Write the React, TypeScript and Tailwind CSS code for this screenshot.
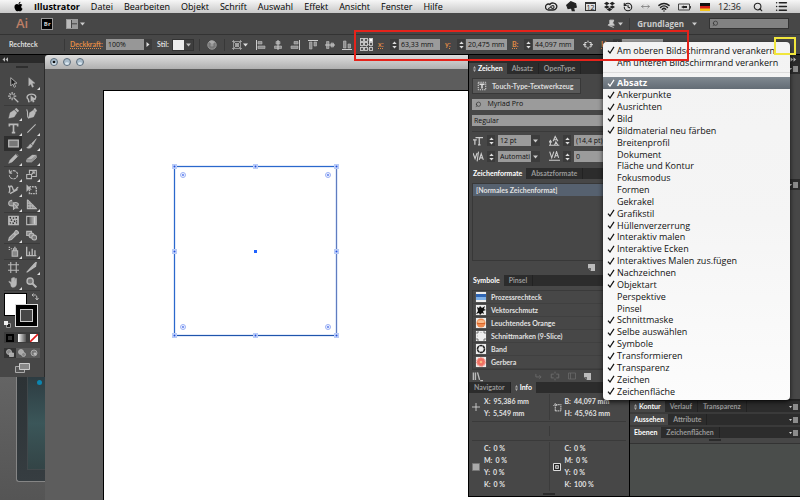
import type { ReactNode } from "react";
import { FaApple, FaDropbox } from "react-icons/fa";
import { History, List, MoveHorizontal, Search, Wifi } from "lucide-react";

const MENUS = ["Datei", "Bearbeiten", "Objekt", "Schrift", "Auswahl", "Effekt", "Ansicht", "Fenster", "Hilfe"];

const PANEL_ITEMS: { label: string; checked: boolean }[] = [
  { label: "Absatz", checked: true },
  { label: "Ankerpunkte", checked: true },
  { label: "Ausrichten", checked: true },
  { label: "Bild", checked: true },
  { label: "Bildmaterial neu färben", checked: true },
  { label: "Breitenprofil", checked: false },
  { label: "Dokument", checked: false },
  { label: "Fläche und Kontur", checked: false },
  { label: "Fokusmodus", checked: false },
  { label: "Formen", checked: false },
  { label: "Gekrakel", checked: false },
  { label: "Grafikstil", checked: true },
  { label: "Hüllenverzerrung", checked: true },
  { label: "Interaktiv malen", checked: true },
  { label: "Interaktive Ecken", checked: true },
  { label: "Interaktives Malen zus.fügen", checked: true },
  { label: "Nachzeichnen", checked: true },
  { label: "Objektart", checked: true },
  { label: "Perspektive", checked: false },
  { label: "Pinsel", checked: false },
  { label: "Schnittmaske", checked: true },
  { label: "Selbe auswählen", checked: true },
  { label: "Symbole", checked: true },
  { label: "Transformieren", checked: true },
  { label: "Transparenz", checked: true },
  { label: "Zeichen", checked: true },
  { label: "Zeichenfläche", checked: true },
];

function Svg({ size = 11, box = 16, children }: { size?: number; box?: number; children: ReactNode }) {
  return (
    <svg
      width={size}
      height={size}
      viewBox={`0 0 ${box} ${box}`}
      fill="none"
      stroke="currentColor"
      strokeWidth="1.6"
      className="shrink-0"
      aria-hidden="true"
    >
      {children}
    </svg>
  );
}

const Caret = () => (
  <svg width="5" height="4" viewBox="0 0 5 4" className="shrink-0" aria-hidden="true">
    <path d="M0 0.5h5L2.5 3.5z" fill="currentColor" />
  </svg>
);

const Tick = () => (
  <svg width="8" height="8" viewBox="0 0 8 8" fill="none" stroke="currentColor" strokeWidth="1.2" aria-hidden="true">
    <path d="M1 4.6l2 2.4L7 0.8" />
  </svg>
);

const Divider = () => <span className="h-3 w-px shrink-0 bg-[#383838]" />;

/* ---------- menu bar ---------- */

function MenuBar() {
  return (
    <nav className="flex h-[13px] shrink-0 items-center justify-between bg-linear-to-b from-[#f6f6f6] to-[#c9c9c9] pl-[13px] pr-[12px] text-[9px] leading-[13px] text-black">
      <div className="flex items-center gap-[11px]">
        <button aria-label="Apple" className="w-[10px]">
          <FaApple size={11} />
        </button>
        <button className="font-bold">Illustrator</button>
        {MENUS.map((m) => (
          <button key={m}>{m}</button>
        ))}
      </div>
      <div className="flex items-center gap-[8px] text-[#222]">
        <svg width="13" height="9" viewBox="0 0 13 9" fill="none" stroke="currentColor" aria-hidden="true">
          <path d="M3.5 8a3 3 0 0 1 0-6q1 0 2 1M5 2a4 3.500 0 1 1 3 6H3.500" strokeWidth="1.300" />
          <path d="M3 6.500q1.500 0 2.500-1.500t2.500-1.500a1.600 1.600 0 0 1 0 3q-1 0-2-1.200" strokeWidth="1.100" />
        </svg>
        <Svg size={11}>
          <path d="M1 6l6-5 7 3 1 5-4 1 1 4H9l-1-4-5 1z" fill="currentColor" />
        </Svg>
        <span className="flex h-[9px] w-[11px] items-center justify-center border border-t-2 border-[#333] text-[7px] leading-none">
          12
        </span>
        <FaDropbox size={11} />
        <History size={10} strokeWidth={2.6} />
        <MoveHorizontal size={9} className="text-[#777]" />
        <Wifi size={12} strokeWidth={3} />
        <svg width="14" height="8" viewBox="0 0 14 8" aria-label="Batterie">
          <path d="M0.500 1h11v6h-11z" fill="none" stroke="#444" />
          <path d="M12.500 3v2.500" stroke="#444" />
          <path d="M3 4l3-1.500v3zM6 3h3v2H6z" fill="#222" />
        </svg>
        <svg width="10" height="8" viewBox="0 0 10 8" aria-label="Deutsch">
          <path d="M0 0h10v3H0z" fill="#111" />
          <path d="M0 3h10v3H0z" fill="#d5201c" />
          <path d="M0 5.5h10V8H0z" fill="#f3c51b" />
        </svg>
        <time>12:36</time>
        <Search size={10} strokeWidth={2.6} className="ml-1" />
        <List size={13} strokeWidth={2.8} className="ml-1" />
      </div>
    </nav>
  );
}

function AppBar() {
  return (
    <header className="flex h-[22px] shrink-0 items-center justify-between border-b border-[#333] bg-[#474747] pl-4 pr-[11px] text-[#ccc]">
      <div className="flex items-center gap-[14px]">
        <span className="text-[13px] font-semibold leading-none text-[#bd7f66]">Ai</span>
        <button
          aria-label="Bridge"
          className="flex h-[10px] w-[10px] items-center justify-center bg-black text-[6px] font-bold leading-none outline outline-[#999]"
        >
          Br
        </button>
        <button aria-label="Dokumente anordnen" className="flex items-center gap-[2px]">
          <svg width="12" height="10" viewBox="0 0 12 10" aria-hidden="true">
            <path d="M0 0h12v10H0z" fill="#999" />
            <path d="M1 1h4v8H1z" fill="#bbb" />
            <path d="M5.5 1v8M6 4.8h5" stroke="#444" />
          </svg>
          <Caret />
        </button>
      </div>
      <div className="flex items-center">
        <button aria-label="Hilfe" className="flex items-center gap-[2px]">
          <Svg size={9}>
            <path d="M5 2l7 0-2 5 3 4H2l3-3zM4 12l8 3" fill="currentColor" />
          </Svg>
          <Caret />
        </button>
        <span className="mr-[7px] ml-[6px] flex">
          <Divider />
        </span>
        <button className="flex items-center gap-2 text-[8px] font-bold">
          Grundlagen
          <Caret />
        </button>
        <label className="ml-3 flex h-[11px] w-[80px] items-center border border-[#333] bg-[#828282] pl-[2px] text-[#222]">
          <Search size={7} className="-scale-x-100" />
          <input aria-label="Suchen" className="w-full min-w-0 outline-none" />
        </label>
      </div>
    </header>
  );
}

function Stepper({ name }: { name: string }) {
  return (
    <button
      aria-label={name}
      className="flex h-[11px] w-[8px] shrink-0 flex-col items-center justify-center gap-[2px] bg-[#3b3b3b] text-[#ddd]"
    >
      <svg width="5" height="8" viewBox="0 0 5 8" aria-hidden="true">
        <path d="M0.3 3h4.4L2.5 0.5zM0.3 5h4.4L2.5 7.5z" fill="currentColor" />
      </svg>
    </button>
  );
}

function Coord({ id, label, value }: { id: string; label: string; value: string }) {
  return (
    <div className="flex items-center">
      <label htmlFor={id} className="w-[12px] text-[7px] font-bold text-[#e08a45] underline decoration-dotted">
        {label}
      </label>
      <Stepper name={`${label} ändern`} />
      <input
        id={id}
        defaultValue={value}
        className="ml-px h-[11px] w-[41px] bg-[#9b9b9b] pl-[2px] font-['Open_Sans',sans-serif] text-[7px] text-[#111] outline-none"
      />
    </div>
  );
}

function AlignIcon({ d, bars }: { d: string; bars: string }) {
  return (
    <svg width="10" height="10" viewBox="0 0 10 10" aria-hidden="true">
      <path d={bars} fill="#8f8f8f" stroke="#bdbdbd" strokeWidth="0.6" />
      <path d={d} stroke="#ccc" />
    </svg>
  );
}

function ControlBar() {
  return (
    <div className="flex h-5 shrink-0 items-center border-b border-black bg-[#474747] pl-[9px] font-['Lato',sans-serif] text-[7px] text-[#dedede]">
      <span className="w-[55px] font-bold">Rechteck</span>
      <Divider />
      <label
        htmlFor="opacity"
        className="ml-[5px] w-[36px] font-bold text-[#e08a45] underline decoration-dotted underline-offset-1"
      >
        Deckkraft:
      </label>
      <input
        id="opacity"
        defaultValue="100%"
        className="h-[11px] w-[38px] bg-[#979797] pl-[2px] font-['Open_Sans',sans-serif] text-[#111] outline-none"
      />
      <button aria-label="Deckkraft wählen" className="flex h-[11px] w-[8px] items-center justify-center bg-[#3c3c3c]">
        <svg width="4" height="5" viewBox="0 0 4 5" aria-hidden="true">
          <path d="M0.5 0v5L3.5 2.5z" fill="#ddd" />
        </svg>
      </button>
      <span className="ml-[5px] w-[15px] font-bold">Stil:</span>
      <button aria-label="Grafikstil" className="flex items-center border border-[#333] bg-[#3e3e3e]">
        <span className="h-[10px] w-[11px] bg-[#ebebeb]" />
        <span className="flex w-[9px] justify-center text-[#bbb]">
          <Caret />
        </span>
      </button>
      <div className="ml-[5px] flex items-center gap-[7px]">
        <Divider />
        <button aria-label="Bildmaterial neu färben">
          <svg width="10" height="10" viewBox="0 0 10 10" aria-hidden="true">
            <circle cx="5" cy="5" r="4.2" fill="#777" stroke="#999" />
            <path d="M5 5L2 1.5A4.5 4.5 0 0 1 8 2z" fill="#aaa" />
            <circle cx="5" cy="5" r="1.6" fill="#999" />
          </svg>
        </button>
        <Divider />
        <button aria-label="Ausrichten an" className="flex items-center gap-px">
          <svg width="10" height="10" viewBox="0 0 10 10" fill="none" stroke="#aaa" aria-hidden="true">
            <path d="M1.500 0v10M8.500 0v10M0 1.500h10M0 8.500h10" strokeWidth="0.800" />
            <path d="M3.500 3.500h3v3h-3zM2 2l6 6M8 2l-6 6" fill="#888" strokeWidth="0.800" />
          </svg>
          <Caret />
        </button>
        <button aria-label="Links" className="ml-px">
          <AlignIcon d="M0.5 0v10" bars="M2 1.5h4v2.5H2zM2 6h7v2.5H2z" />
        </button>
        <button aria-label="Horizontal zentriert">
          <AlignIcon d="M5 0v10" bars="M3 1.5h4v2.5H3zM1.5 6h7v2.5h-7z" />
        </button>
        <button aria-label="Rechts">
          <AlignIcon d="M9.5 0v10" bars="M4 1.5h4v2.5H4zM1 6h7v2.5H1z" />
        </button>
        <button aria-label="Oben" className="ml-px">
          <AlignIcon d="M0 0.5h10" bars="M1.5 2h2.5v7H1.5zM6 2h2.5v4H6z" />
        </button>
        <button aria-label="Vertikal zentriert">
          <AlignIcon d="M0 5h10" bars="M1.5 1.5h2.5v7H1.5zM6 3h2.5v4H6z" />
        </button>
        <button aria-label="Unten">
          <AlignIcon d="M0 9.5h10" bars="M1.5 1h2.5v7H1.5zM6 4h2.5v4H6z" />
        </button>
      </div>
      <div className="ml-2 flex items-center gap-[5px]">
        <button aria-label="Bezugspunkt">
          <svg width="13" height="13" viewBox="0 0 13 13" fill="#555" stroke="#ccc" aria-hidden="true">
            <path d="M2 2h9v9H2zM2 6.5h9M6.5 2v9" fill="none" strokeWidth="0.6" />
            {[0, 4, 9].map((x) =>
              [0, 4, 9].map((y) => <rect key={`${x}${y}`} x={x + 0.5} y={y + 0.5} width="3" height="3" strokeWidth="0.900" />),
            )}
            <rect x="9.5" y="0.5" width="3" height="3" fill="#fff" />
          </svg>
        </button>
        <Coord id="x" label="x:" value="63,33 mm" />
        <Coord id="y" label="y:" value="20,475 mm" />
        <Coord id="w" label="B:" value="44,097 mm" />
        <button aria-label="Proportionen erhalten" className="mr-[3px] ml-1">
          <Svg size={10}>
            <path d="M6 4H3v7h3M10 4h3v7h-3M8 1v3M8 11v4M0 7.5h5M11 7.5h5" />
          </Svg>
        </button>
        <Coord id="h" label="H:" value="45,963 mm" />
      </div>
    </div>
  );
}

/* ---------- toolbox ---------- */

type Tool = { name: string; icon: ReactNode; more?: boolean; active?: boolean };

const TOOLS: Tool[][] = [
  [
    { name: "Auswahl", icon: <path d="M4 1v12l3-3 2 5 2-1-2-5h4z" fill="#1e1e1e" strokeWidth="1.3" /> },
    { name: "Direktauswahl", icon: <path d="M4 1v12l3-3 2 5 2-1-2-5h4z" fill="currentColor" strokeWidth="0.6" />, more: true },
    { name: "Zauberstab", icon: <path d="M8 8l7 7M6 0v4M6 8v4M0 6h4M8 6h4M2 2l2 2M10 2L8 4M2 10l2-2" strokeWidth="1.8" /> },
    {
      name: "Lasso",
      icon: (
        <>
          <path d="M4 11C0 9 1 3 8 3s8 6 3 8M4 11c-1 2 0 3 1 4" strokeWidth="2" />
          <path d="M7 5v9l2-2 1 3 2-1-1-3h3z" fill="currentColor" strokeWidth="0.5" />
        </>
      ),
    },
  ],
  [
    { name: "Zeichenstift", icon: <path d="M1 15l2-8 6-4 4 4-4 6-8 2zM10 2l2-2 4 4-2 2z" fill="currentColor" strokeWidth="0.4" />, more: true },
    {
      name: "Kurvenzeichner",
      icon: (
        <>
          <path d="M4 15l1-8 6-4 3 4-3 6zM11 2l2-2 3 4-2 2z" fill="currentColor" strokeWidth="0.4" />
          <path d="M4 15C0 11 4 8 1 2" />
        </>
      ),
    },
    { name: "Text", icon: <path d="M2 5V2h12v3M8 2v12M5.5 14h5" strokeWidth="2.4" />, more: true },
    { name: "Liniensegment", icon: <path d="M2 14L14 2" />, more: true },
    { name: "Rechteck", icon: <path d="M1 3h14v10H1z" fill="#777" strokeWidth="1.8" />, more: true, active: true },
    { name: "Pinsel", icon: <path d="M15 1l-7 7 2 2zM7 9c-3 0-2 4-6 5 4 2 8 0 8-3z" fill="currentColor" strokeWidth="0.8" />, more: true },
    { name: "Buntstift", icon: <path d="M1 15l2-5 8-8 3 3-8 8zM12 1l3 3" fill="currentColor" strokeWidth="0.8" />, more: true },
    {
      name: "Radiergummi",
      icon: (
        <>
          <path d="M1 9l8-6h6l-7 6z" fill="currentColor" strokeWidth="0.5" />
          <path d="M1 10h7l7-6v3l-7 6H1z" fill="#888" strokeWidth="1" />
        </>
      ),
      more: true,
    },
  ],
  [
    { name: "Drehen", icon: <path d="M3 5a6 6 0 1 1-1 4M2 1v5h5" strokeDasharray="4 1" />, more: true },
    { name: "Skalieren", icon: <path d="M1 8h7v6H1zM5 7V2h10v9H9M8 8l4-4M9 4h3v3" />, more: true },
    { name: "Breite", icon: <path d="M1 13c4-2-1-9 3-10s2 8 6 6 2-4 5-4M3 14L14 8M1 2v3" strokeWidth="2" />, more: true },
    {
      name: "Frei transformieren",
      icon: (
        <>
          <path d="M5 4h10v10H5z" strokeWidth="2" strokeDasharray="2.500 1.200" />
          <path d="M1 1v10l3-3h4z" fill="currentColor" strokeWidth="0.500" />
        </>
      ),
    },
    { name: "Formerstellung", icon: <path d="M6 2a5 4 0 1 0 0 8h3M8 6a4 3 0 1 1 3 5M8 6v9l2-2h4z" fill="#808080" />, more: true },
    { name: "Perspektivenraster", icon: <path d="M2 1v13h13L2 1M6 4v10M10 8v6M2 6h5M2 10h9" fill="#808080" />, more: true },
  ],
  [
    {
      name: "Gitter",
      icon: (
        <>
          <path d="M1 2h14v12H1z" fill="currentColor" />
          <path d="M3 3l1 2M7 4l2 1M12 3v2M4 8l2-1M9 8l1 2M13 8l-1 1M3 12l1-1M7 11l1 2M12 12l1-1" stroke="#2a2a2a" strokeWidth="2" />
        </>
      ),
    },
    {
      name: "Verlauf",
      icon: (
        <>
          <path d="M1 2h14v12H1z" fill="#777" />
          <path d="M8 3h3v10H8z" fill="#999" stroke="none" />
          <path d="M2 3h3v10H2z" fill="#444" stroke="none" />
          <path d="M11 3h3v10h-3z" fill="#ccc" stroke="none" />
        </>
      ),
    },
    { name: "Pipette", icon: <path d="M1 15l1-4 6-6 3 3-6 6zM9 4l3-4 4 4-4 3z" fill="#999" />, more: true },
    {
      name: "Angleichen",
      icon: (
        <>
          <path d="M1 2h7v6H1z" fill="#888" />
          <circle cx="8" cy="8" r="3.5" fill="#888" />
          <circle cx="12" cy="11" r="3.5" fill="#777" />
        </>
      ),
    },
  ],
  [
    { name: "Symbol aufsprühen", icon: <path d="M6 7h8v8H6zM8 7V4h4v3M1 2h2M4 4h2M1 5h2M9 2h2" fill="#888" />, more: true },
    { name: "Säulendiagramm", icon: <path d="M1 1v13h14M5 14V8M9 14V4M13 14V6" strokeWidth="2" />, more: true },
  ],
  [
    { name: "Zeichenfläche", icon: <path d="M4 0v16M12 0v16M0 4h16M0 12h16" /> },
    { name: "Slice", icon: <path d="M1 15L10 5l3 2zM11 4l4-4-1 6z" fill="currentColor" />, more: true },
    { name: "Hand", icon: <path d="M4 10L1 7l1-1 3 2V2h1.6v5V1h1.6v6V1h1.6v6l1-5h1.6v7c0 4-2 6-5 6s-3-2-3.400-5z" fill="currentColor" strokeWidth="0.7" />, more: true },
    {
      name: "Zoom",
      icon: (
        <>
          <circle cx="6" cy="6" r="4.500" fill="#777" strokeWidth="2" />
          <path d="M9 9l6 6" strokeWidth="3" />
        </>
      ),
    },
  ],
];

function Toolbox() {
  return (
    <aside className="border-r border-[#2b2b2b] bg-[#474747] text-[#b8b8b8]">
      <div className="flex h-2 items-center bg-[#2a2a2a] pl-[2px]">
        <svg width="7" height="5" viewBox="0 0 7 5" aria-hidden="true">
          <path d="M3 0.300v4.400L0.500 2.500zM6 0.300v4.400L3.500 2.500z" fill="#bbb" />
        </svg>
      </div>
      <div className="mx-auto mt-[3px] mb-[7px] h-[2px] w-3 bg-[#2e2e2e]" />
      {TOOLS.map((group, i) => (
        <div key={i} className="mx-1 grid grid-cols-2 border-b border-[#3a3a3a]">
          {group.map((tool) => (
            <button
              key={tool.name}
              aria-label={tool.name}
              className={`relative flex h-[15px] items-center justify-center ${tool.active ? "bg-[#2e2e2e]" : ""}`}
            >
              <Svg>{tool.icon}</Svg>
              {tool.more && (
                <svg width="3" height="3" viewBox="0 0 3 3" className="absolute right-0 bottom-0" aria-hidden="true">
                  <path d="M3 0v3H0z" fill="#ddd" />
                </svg>
              )}
            </button>
          ))}
        </div>
      ))}
      <div className="relative h-[37px]">
        <button aria-label="Fläche" className="absolute top-[2px] left-1 h-[23px] w-[23px] border border-black bg-white" />
        <button
          aria-label="Kontur"
          className="absolute top-[13px] left-[15px] flex h-[23px] w-[23px] items-center justify-center border border-[#ddd] bg-black"
        >
          <span className="h-[13px] w-[13px] border border-[#ccc] bg-[#474747]" />
        </button>
        <button aria-label="Vertauschen" className="absolute top-[2px] right-[5px]">
          <Svg size={8}>
            <path d="M5 1L2 4l3 3M2 4h7q3 0 3 8M9 10l3 4 3-4" strokeWidth="2" />
          </Svg>
        </button>
        <button aria-label="Standard" className="absolute bottom-0 left-1">
          <svg width="7" height="7" viewBox="0 0 7 7" aria-hidden="true">
            <path d="M2.500 2.500h4v4h-4z" fill="#222" stroke="#999" />
            <path d="M0 0h4v4H0z" fill="#eee" />
          </svg>
        </button>
      </div>
      <div className="mx-1 mt-1 grid h-[11px] grid-cols-3 place-items-center bg-[#3b3b3b]">
        <button aria-label="Farbe" className="h-2 w-2 border-2 border-black bg-[#333]" />
        <button aria-label="Verlauf" className="h-2 w-2 bg-linear-to-r from-white to-[#555]" />
        <button aria-label="Ohne">
          <svg width="8" height="8" viewBox="0 0 8 8" aria-hidden="true">
            <path d="M0 0h8v8H0z" fill="#fff" />
            <path d="M0 8L8 0" stroke="#e01b1b" strokeWidth="1.600" />
          </svg>
        </button>
      </div>
      <div className="mx-1 mt-[5px] grid h-[10px] grid-cols-3 place-items-center bg-[#5a5a5a]">
        <button aria-label="Normal zeichnen" className="flex h-full w-full items-center justify-center bg-[#333]">
          <Svg size={8}>
            <circle cx="6" cy="6" r="5" fill="#888" />
            <path d="M7 8h8v7H7z" fill="#aaa" />
          </Svg>
        </button>
        <button aria-label="Dahinter zeichnen">
          <Svg size={8}>
            <circle cx="6" cy="6" r="5" fill="#aaa" />
            <circle cx="11" cy="11" r="4" fill="#888" />
          </Svg>
        </button>
        <button aria-label="Innen zeichnen">
          <Svg size={8}>
            <circle cx="8" cy="8" r="6" fill="#777" />
            <path d="M8 8h4v3H8z" fill="#ccc" />
          </Svg>
        </button>
      </div>
      <button aria-label="Bildschirmmodus" className="mx-auto mt-1 mb-[3px] block">
        <svg width="15" height="12" viewBox="0 0 15 12" aria-hidden="true">
          <path d="M0.500 4.500h9v6h-9z" fill="#555" stroke="#aaa" />
          <path d="M4.500 1.500h10v6h-10z" fill="#888" stroke="#ccc" />
        </svg>
      </button>
    </aside>
  );
}

function Desktop() {
  return (
    <div className="min-h-0 flex-1 overflow-hidden bg-linear-to-b from-[#646464] to-[#555]">
      <div className="ml-4 h-[105px] rounded-bl-[3px] border-b border-l border-[#858585] bg-linear-to-b from-[#2c3235] to-[#363d41] pl-[10px]">
        <div className="h-[93px] border-b border-l border-[#41484b] bg-linear-to-b from-[#2d3c42] via-[#3b5659] to-[#334446] pt-[3px] pl-[9px]">
          <div className="h-[5px] w-[5px] rounded-full bg-[#0c86b0]" />
        </div>
      </div>
    </div>
  );
}

/* ---------- document ---------- */

function Artwork() {
  const xs = [5, 86, 167];
  const ys = [5, 90, 174];
  return (
    <svg width="172" height="180" viewBox="0 0 172 180" fill="none" aria-label="Rechteck">
      <path d="M5.500 5.500h162v169h-162z" stroke="#e2eaf9" strokeWidth="3" />
      <path d="M5.500 175V5.500H168" stroke="#2a68cc" />
      <path d="M5 174.500h163" stroke="#1f55ac" />
      <path d="M167.500 5v170" stroke="#5f7cc0" />
      {xs.map((x) =>
        ys.map((y) =>
          x === 86 && y === 90 ? (
            <rect key="c" x="85" y="89" width="3" height="3" fill="#1f62ff" />
          ) : (
            <g key={`${x}-${y}`}>
              <rect x={x - 1.5} y={y - 1.5} width="4" height="4" fill="#eef3ff" stroke="#b9ccf7" />
              <rect x={x - 0.5} y={y - 0.5} width="2" height="2" fill="#1c4fe0" />
            </g>
          ),
        ),
      )}
      {[14, 159].map((x) =>
        [14, 166].map((y) => (
          <g key={`${x}-${y}`}>
            <circle cx={x} cy={y} r="2.500" stroke="#9db2f4" fill="#eef2ff" />
            <circle cx={x} cy={y} r="0.900" fill="#4b70ec" />
          </g>
        )),
      )}
    </svg>
  );
}

function TrafficLight({ name, dot }: { name: string; dot?: boolean }) {
  return (
    <button aria-label={name}>
      <svg width="8" height="8" viewBox="0 0 8 8" aria-hidden="true">
        <circle cx="4" cy="4" r="3.500" fill="#a9bccb" stroke="#5f6f7d" />
        <ellipse cx="4" cy="5.500" rx="2" ry="1.300" fill="#dbe7f0" />
        {dot && <circle cx="4" cy="4" r="1.300" fill="#111" />}
      </svg>
    </button>
  );
}

function Document() {
  return (
    <main className="flex min-w-0 flex-1 flex-col bg-[#5d5d5d]">
      <div className="bg-[#2a2a2a]">
        <div className="flex h-[14px] items-center gap-[5px] rounded-tl-[3px] bg-linear-to-b from-[#dedede] to-[#b0b0b0] pl-[5px]">
          <TrafficLight name="Schließen" dot />
          <TrafficLight name="Minimieren" />
          <TrafficLight name="Zoomen" />
        </div>
      </div>
      <div className="mt-[21px] ml-[58px] flex-1 overflow-hidden border-t border-l border-black bg-white pt-[70px] pl-[65px]">
        <Artwork />
      </div>
    </main>
  );
}

/* ---------- panels ---------- */

function Tabs({ tabs, active, arrows, menu }: { tabs: string[]; active: string; arrows?: boolean; menu?: boolean }) {
  return (
    <div className="flex h-[11px] shrink-0 items-stretch bg-[#2c2c2c] text-[7px] leading-[11px] font-bold text-[#999]">
      {tabs.map((t) => (
        <button
          key={t}
          className={
            t === active
              ? "flex items-center gap-[2px] bg-[#474747] px-1 text-white"
              : "border-r border-[#222] px-[5px]"
          }
        >
          {arrows && t === active && (
            <svg width="3" height="6" viewBox="0 0 3 6" aria-hidden="true">
              <path d="M0 2.500h3L1.500 0zM0 3.500h3L1.500 6z" fill="#aaa" />
            </svg>
          )}
          {t}
        </button>
      ))}
      {menu && (
        <button aria-label="Bedienfeldmenü" className="mr-[2px] ml-auto">
          <svg width="9" height="6" viewBox="0 0 9 6" aria-hidden="true">
            <path d="M0 2h3L1.500 4z" fill="#ccc" />
            <path d="M4 1h5M4 3h5M4 5h5" stroke="#aaa" strokeWidth="1.400" />
          </svg>
        </button>
      )}
    </div>
  );
}

function SizeField({ label, value, icon }: { label: string; value: string; icon: ReactNode }) {
  return (
    <div className="flex shrink-0 items-center gap-[3px]">
      <span className="flex w-[12px] justify-center">{icon}</span>
      <Stepper name={`${label} ändern`} />
      <div className="flex">
        <input
          aria-label={label}
          defaultValue={value}
          className="h-[11px] w-[33px] bg-[#9b9b9b] pl-[2px] font-['Open_Sans',sans-serif] text-[7px] text-[#111] outline-none"
        />
        <button aria-label={`${label} wählen`} className="flex h-[11px] w-[9px] items-center justify-center bg-[#3c3c3c] text-[#ccc]">
          <Caret />
        </button>
      </div>
    </div>
  );
}

function CharacterPanel() {
  return (
    <section>
      <Tabs tabs={["Zeichen", "Absatz", "OpenType"]} active="Zeichen" arrows />
      <div className="flex h-[94px] flex-col gap-[5px] overflow-hidden pt-1 pl-[3px]">
        <button className="flex h-4 w-[109px] shrink-0 items-center gap-[5px] border border-[#383838] bg-[#595959] pl-1 text-[7px] font-bold whitespace-nowrap text-[#dedede]">
          <Svg size={10}>
            <path d="M2 2h12v12H2z" strokeDasharray="2 1.500" />
            <path d="M4 5h8M8 5v7" strokeWidth="2.400" />
          </Svg>
          Touch-Type-Textwerkzeug
        </button>
        <label className="flex h-[11px] shrink-0 items-center gap-[6px] bg-[#9b9b9b] pl-[3px] text-[#222]">
          <Search size={7} className="-scale-x-100" />
          <input
            aria-label="Schriftfamilie"
            defaultValue="Myriad Pro"
            className="w-full min-w-0 font-['Open_Sans',sans-serif] text-[7px] text-[#111] outline-none"
          />
        </label>
        <select
          aria-label="Schriftschnitt"
          className="h-[11px] shrink-0 appearance-none bg-[#9b9b9b] pl-[2px] font-['Open_Sans',sans-serif] text-[7px] leading-[11px] text-[#111]"
        >
          <option>Regular</option>
        </select>
        <div className="flex flex-col gap-[5px] border-t border-[#3a3a3a] pt-[3px] text-[#ccc]">
          <div className="flex gap-[8px]">
            <SizeField
              label="Schriftgrad"
              value="12 pt"
              icon={
                <Svg size={10}>
                  <path d="M0 6h6M3 6v8M4 2.500h12M10 2v12M8 14h4" strokeWidth="2" />
                </Svg>
              }
            />
            <SizeField
              label="Zeilenabstand"
              value="(14,4 pt)"
              icon={
                <Svg size={11}>
                  <path d="M6 9l3-7 4 7M7 7h5M8 15l2-5 3 5M2 8v6M0 11l2-3 2 3M0 15h15" />
                </Svg>
              }
            />
          </div>
          <div className="flex gap-[8px]">
            <SizeField
              label="Kerning"
              value="Automati"
              icon={
                <Svg size={11}>
                  <path d="M0 3l3 8 3-8M8 1L6 15M9 13l3-9 3 9M10 10h4" />
                </Svg>
              }
            />
            <SizeField
              label="Laufweite"
              value="0"
              icon={
                <Svg size={11}>
                  <path d="M1 1l3 9 3-9M8 10l3-9 3 9M9 7h4M0 13.500h16" />
                </Svg>
              }
            />
          </div>
        </div>
      </div>
    </section>
  );
}

const NewIcon = () => (
  <svg width="7" height="7" viewBox="0 0 7 7" aria-hidden="true">
    <path d="M0 0h7v7H3L0 4z" fill="#bbb" />
    <path d="M0 4h3v3" fill="#666" />
  </svg>
);

function StylesPanel() {
  return (
    <section>
      <Tabs tabs={["Zeichenformate", "Absatzformate"]} active="Zeichenformate" />
      <div className="flex h-[96px] flex-col pt-1 pl-[3px] text-[7px] font-bold text-[#e0e0e0]">
        <ul className="h-[78px] border border-[#383838]">
          <li className="h-3 bg-[#56616f] pl-[3px] leading-[12px]">[Normales Zeichenformat]</li>
        </ul>
        <button aria-label="Neues Zeichenformat" className="mt-[3px] ml-[116px] w-[7px]">
          <NewIcon />
        </button>
      </div>
    </section>
  );
}

const SYMBOLS: { name: string; art: ReactNode }[] = [
  {
    name: "Prozessrechteck",
    art: (
      <>
        <path d="M1 3h10v4H1z" fill="#2f66b5" />
        <path d="M1 6h10v3H1z" fill="#7fb0e6" />
      </>
    ),
  },
  {
    name: "Vektorschmutz",
    art: <path d="M2 3l2 1 1-2 2 2 3-2-1 3 2 1-3 1 1 3-2-1-2 2-1-2-3 1 2-3z" fill="#111" />,
  },
  {
    name: "Leuchtendes Orange",
    art: (
      <>
        <circle cx="6" cy="6" r="4.500" fill="#ee8a4e" />
        <ellipse cx="6" cy="4.500" rx="3.500" ry="1.600" fill="#f9bd8e" />
        <path d="M2 6.500h8" stroke="#d8652b" />
      </>
    ),
  },
  {
    name: "Schnittmarken (9-Slice)",
    art: <path d="M2 4V2h2M8 2h2v2M10 8v2H8M4 10H2V8M6 2v0.500M2 6h0.500" fill="none" stroke="#555" strokeWidth="0.800" />,
  },
  {
    name: "Band",
    art: <circle cx="6" cy="6" r="3.500" fill="none" stroke="#222" strokeWidth="1.600" strokeDasharray="3.200 0.400" />,
  },
  {
    name: "Gerbera",
    art: (
      <>
        <circle cx="6" cy="6" r="4.200" fill="#ef6f63" stroke="#f4978c" strokeDasharray="1.500 0.800" strokeWidth="1.400" />
        <circle cx="6" cy="6" r="1.300" fill="#f8b67c" />
      </>
    ),
  },
];

function SymbolsPanel() {
  return (
    <section>
      <Tabs tabs={["Symbole", "Pinsel"]} active="Symbole" />
      <div className="flex h-[96px] flex-col pt-[4px] pl-[3px] text-[7px] font-bold text-[#e0e0e0]">
        <ul className="border border-r-0 border-[#3a3a3a]">
          {SYMBOLS.map((s) => (
            <li key={s.name} className="flex h-[13px] items-center gap-1 border-b border-[#404040] pl-[2px]">
              <svg width="12" height="12" viewBox="0 0 12 12" className="shrink-0" aria-hidden="true">
                <path d="M0.500 0.500h11v11h-11z" fill="#ededed" stroke="#222" strokeWidth="0.600" />
                {s.art}
              </svg>
              {s.name}
            </li>
          ))}
        </ul>
        <div className="flex flex-1 items-center gap-2 text-[#6a6a6a]">
          <button aria-label="Symbol-Bibliotheken" className="mr-auto text-[#bbb]">
            <Svg size={11}>
              <path d="M2 2v11M5 2v11M8 2l3 11M12 14h4" strokeWidth="2" />
            </Svg>
          </button>
          <button aria-label="Symbolinstanz platzieren">
            <Svg size={7}>
              <path d="M2 2v7h11M10 5l4 4-4 4" strokeWidth="2" />
            </Svg>
          </button>
          <button aria-label="Verknüpfung lösen">
            <Svg size={10}>
              <path d="M6 5H2v6h4M10 5h4v6h-4M8 1v3M8 12v3" />
            </Svg>
          </button>
          <button aria-label="Symboloptionen">
            <Svg size={8}>
              <path d="M1 2h14v12H1zM5 2v12" />
            </Svg>
          </button>
          <button aria-label="Neues Symbol">
            <NewIcon />
          </button>
          <button aria-label="Symbol löschen" className="mr-[18px] ml-1">
            <Svg size={8}>
              <path d="M3 5h10v10H3zM1 3h14" />
            </Svg>
          </button>
        </div>
      </div>
    </section>
  );
}

function Readout({ icon, rows }: { icon: ReactNode; rows: [string, string][] }) {
  return (
    <div className="flex flex-1 items-center gap-[3px] pl-[3px] not-first:border-l not-first:border-[#3c3c3c]">
      <span className="w-[9px] shrink-0">{icon}</span>
      <dl>
        {rows.map(([k, v]) => (
          <div key={k} className="flex h-3 items-center gap-[3px] whitespace-nowrap">
            <dt>{k}</dt>
            <dd>{v}</dd>
          </div>
        ))}
      </dl>
    </div>
  );
}

const Grip = () => <div className="mx-auto h-[2px] w-3 bg-[#2b2b2b]" />;

function InfoPanel() {
  return (
    <section className="flex min-h-0 flex-1 flex-col">
      <Tabs tabs={["Navigator", "Info"]} active="Info" arrows />
      <div className="text-[7px] font-bold text-[#e0e0e0]">
        <div className="flex h-7 py-px">
          <Readout
            icon={
              <Svg size={8}>
                <path d="M8 0v16M0 8h16" />
              </Svg>
            }
            rows={[
              ["X:", "95,386 mm"],
              ["Y:", "5,549 mm"],
            ]}
          />
          <Readout
            icon={
              <Svg size={9}>
                <path d="M4 14V3h11M1 5l3-4 3 4M4 14h10V5" strokeDasharray="3 1" />
              </Svg>
            }
            rows={[
              ["B:", "44,097 mm"],
              ["H:", "45,963 mm"],
            ]}
          />
        </div>
        <div className="mx-[3px] flex h-[20px] border-y border-[#3a3a3a] py-1">
          <div className="flex-1" />
          <div className="flex-1 border-l border-[#3a3a3a]" />
        </div>
        <div className="flex h-[50px] pt-px">
          <Readout
            icon={
              <svg width="8" height="8" viewBox="0 0 8 8" aria-hidden="true">
                <path d="M0.500 0.500h7v7h-7z" fill="#aaa" stroke="#777" />
              </svg>
            }
            rows={[
              ["C:", "0 %"],
              ["M:", "0 %"],
              ["Y:", "0 %"],
              ["K:", "0 %"],
            ]}
          />
          <Readout
            icon={
              <svg width="8" height="8" viewBox="0 0 8 8" aria-hidden="true">
                <path d="M0.500 0.500h7v7h-7z" fill="#222" stroke="#ddd" />
                <path d="M2.500 2.500h3v3h-3z" fill="#777" stroke="#bbb" />
              </svg>
            }
            rows={[
              ["C:", "0 %"],
              ["M:", "0 %"],
              ["Y:", "0 %"],
              ["K:", "100 %"],
            ]}
          />
        </div>
      </div>
    </section>
  );
}

function Panels() {
  return (
    <aside className="mb-[3px] flex w-[332px] shrink-0 flex-col border-b border-l border-black bg-[#474747] font-['Lato',sans-serif]">
      <div className="flex h-2 shrink-0 items-center justify-end bg-[#2a2a2a] pr-[3px]">
        <svg width="7" height="5" viewBox="0 0 7 5" aria-hidden="true">
          <path d="M0.500 0.300v4.400L3 2.500zM3.500 0.300v4.400L6 2.500z" fill="#bbb" />
        </svg>
      </div>
      <div className="flex min-h-0 flex-1">
        <div className="flex w-[160px] shrink-0 flex-col">
          <CharacterPanel />
          <StylesPanel />
          <SymbolsPanel />
          <InfoPanel />
          <div className="pb-px">
            <Grip />
          </div>
        </div>
        <div className="flex min-w-0 flex-1 flex-col border-l border-black">
          <Tabs tabs={[]} active="" menu />
          <div className="h-[105px] shrink-0" />
          <Tabs tabs={[]} active="" menu />
          <div className="min-h-0 flex-1" />
          <div className="flex flex-col gap-[2px] border-t-2 border-[#222] bg-[#3a3a3a]">
            <Tabs tabs={["Kontur", "Verlauf", "Transparenz"]} active="Kontur" arrows menu />
            <Tabs tabs={["Aussehen", "Attribute"]} active="Aussehen" menu />
            <Tabs tabs={["Ebenen", "Zeichenflächen"]} active="Ebenen" menu />
          </div>
          <div className="border-b border-[#333] pt-px pb-[2px]">
            <Grip />
          </div>
          <div className="h-[52px] shrink-0 bg-[#4a4d4b]" />
        </div>
      </div>
    </aside>
  );
}

/* ---------- flyout of the control bar ---------- */

function MenuItem({ label, checked, active }: { label: string; checked: boolean; active?: boolean }) {
  return (
    <li className="flex">
      <button
        className={`flex w-full items-center gap-[2px] pl-1 text-left whitespace-nowrap ${
          active ? "bg-linear-to-b from-[#808991] to-[#636c75] font-bold text-white" : ""
        }`}
      >
        <span className="w-2">{checked && <Tick />}</span>
        {label}
      </button>
    </li>
  );
}

function PanelMenu() {
  return (
    <div className="absolute top-[42px] right-[10px] w-[187px] rounded-[4px] bg-linear-to-b from-[#f3f3f3] via-[#f5f5f5] to-[#fcfcfc] pt-[2px] pb-[3px] text-[9px] leading-[11px] text-[#111] shadow-[0_2px_5px_rgba(0,0,0,0.7)]">
      <ul className="grid h-6 grid-rows-2">
        <MenuItem label="Am oberen Bildschirmrand verankern" checked />
        <MenuItem label="Am unteren Bildschirmrand verankern" checked={false} />
      </ul>
      <hr className="my-1 border-[#ddd]" />
      <ul className="grid h-[320px] auto-rows-fr">
        {PANEL_ITEMS.map((item) => (
          <MenuItem key={item.label} {...item} active={item.label === "Absatz"} />
        ))}
      </ul>
    </div>
  );
}

export default function App() {
  return (
    <div className="relative flex h-screen flex-col overflow-hidden bg-white font-['Open_Sans','Noto_Sans',sans-serif]">
      <MenuBar />
      <AppBar />
      <ControlBar />
      <div className="flex min-h-0 flex-1">
        <div className="flex w-[45px] shrink-0 flex-col">
          <Toolbox />
          <Desktop />
        </div>
        <Document />
        <Panels />
      </div>
      <PanelMenu />
      <div className="pointer-events-none absolute top-[30px] left-[354px] h-[31px] w-[335px] border-2 border-[#e5231b]" />
      <div className="pointer-events-none absolute top-[37px] right-[4px] h-[18px] w-[22px] border-2 border-[#f1e63c]" />
    </div>
  );
}
